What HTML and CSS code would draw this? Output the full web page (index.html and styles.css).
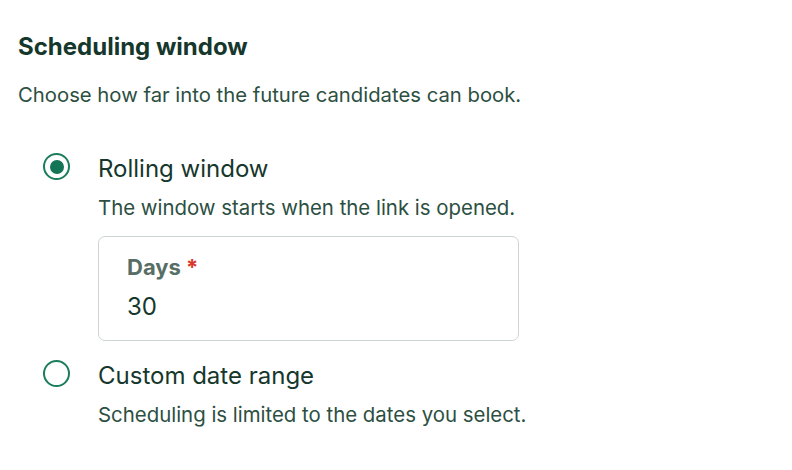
FILE: index.html
```html
<!DOCTYPE html>
<html lang="en">
<head>
  <meta charset="UTF-8">
  <title>Scheduling window</title>
  <link rel="stylesheet" href="styles.css">
</head>
<body>
  <section class="window-settings">
    <h2 class="title">Scheduling window</h2>
    <p class="intro">Choose how far into the future candidates can book.</p>

    <div class="option">
      <span class="radio checked"></span>
      <div class="option-body">
        <div class="option-label">Rolling window</div>
        <div class="option-hint">The window starts when the link is opened.</div>
        <div class="field">
          <div class="field-label">Days <span class="req">*</span></div>
          <div class="field-value">30</div>
        </div>
      </div>
    </div>

    <div class="option">
      <span class="radio"></span>
      <div class="option-body">
        <div class="option-label">Custom date range</div>
        <div class="option-hint">Scheduling is limited to the dates you select.</div>
      </div>
    </div>
  </section>
</body>
</html>
```

FILE: styles.css
```css
body {
  margin: 0;
  background: #fff;
  font-family: Inter, "Liberation Sans", sans-serif;
  color: #15372c;
}
.window-settings {
  padding: 31px 18px;
}
.title {
  margin: 0;
  font-size: 24px;
  font-weight: 700;
  line-height: 32px;
}
.intro {
  margin: 18px 0 0;
  font-size: 20.3px;
  line-height: 28px;
  color: #2c4f42;
}
.option {
  display: flex;
  gap: 28px;
  margin-top: 44px;
  padding-left: 25px;
}
.option + .option {
  margin-top: 19px;
}
.radio {
  flex: none;
  box-sizing: border-box;
  width: 27px;
  height: 27px;
  margin-top: 0;
  border: 2px solid #1a7d5c;
  border-radius: 50%;
  display: flex;
  align-items: center;
  justify-content: center;
}
.radio.checked::after {
  content: "";
  width: 14px;
  height: 14px;
  border-radius: 50%;
  background: #137456;
}
.option-label {
  font-size: 24px;
  line-height: 32px;
  color: #15372c;
}
.option-hint {
  margin-top: 10px;
  font-size: 20.4px;
  line-height: 26px;
  color: #2c4f42;
}
.field {
  width: 421px;
  box-sizing: border-box;
  margin-top: 15px;
  padding: 16px 28px 18px;
  border: 1.5px solid #cdd5d2;
  border-radius: 7px;
}
.field-label {
  font-size: 22px;
  font-weight: 700;
  line-height: 28px;
  color: #576e66;
}
.req {
  color: #d6382c;
}
.field-value {
  margin-top: 11px;
  font-size: 24px;
  line-height: 30px;
  color: #15372c;
}
```
